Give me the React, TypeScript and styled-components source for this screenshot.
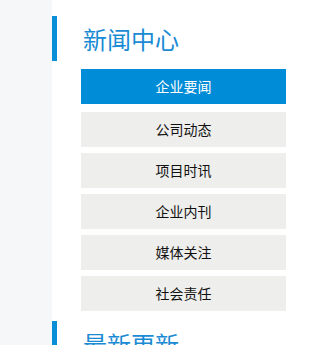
import styled, { createGlobalStyle } from 'styled-components';

const GlobalStyle = createGlobalStyle`
  html, body {
    margin: 0;
    padding: 0;
    background: #fff;
  }
  body {
    font-family: "Noto Sans CJK SC", "Liberation Sans", sans-serif;
  }
`;

// Página com a faixa cinza à esquerda
const Page = styled.div`
  display: flex;
  min-height: 345px;
`;

const Gutter = styled.div`
  width: 52px;
  flex-shrink: 0;
  background-color: #f5f7f9;
`;

const Sidebar = styled.aside`
  display: flex;
  flex-direction: column;
  padding-top: 16px;
`;

const Heading = styled.h2`
  margin: 0;
  height: 45px;
  line-height: 45px;
  border-left: 5px solid #0a8ed8;
  padding-left: 26px;
  font-size: 24px;
  font-weight: normal;
  color: #1a8ad4;
`;

const Menu = styled.ul`
  list-style: none;
  margin: 8px 0 10px 29px;
  padding: 0;
  width: 205px;
`;

const MenuItem = styled.li<{ $active?: boolean }>`
  height: 35px;
  line-height: 35px;
  margin-bottom: ${(p) => (p.$active ? '8px' : '6px')};
  text-align: center;
  font-size: 14px;
  color: ${(p) => (p.$active ? '#fff' : '#111')};
  background-color: ${(p) => (p.$active ? '#008cd6' : '#eeeeec')};
  cursor: pointer;

  &:last-child {
    margin-bottom: 0;
  }
`;

const items = ['企业要闻', '公司动态', '项目时讯', '企业内刊', '媒体关注', '社会责任'];

export default function App() {
  return (
    <>
      <GlobalStyle />
      <Page>
        <Gutter />
        <Sidebar>
          <Heading>新闻中心</Heading>
          <Menu>
            {items.map((label, i) => (
              <MenuItem key={label} $active={i === 0}>
                {label}
              </MenuItem>
            ))}
          </Menu>
          <Heading>最新更新</Heading>
        </Sidebar>
      </Page>
    </>
  );
}
